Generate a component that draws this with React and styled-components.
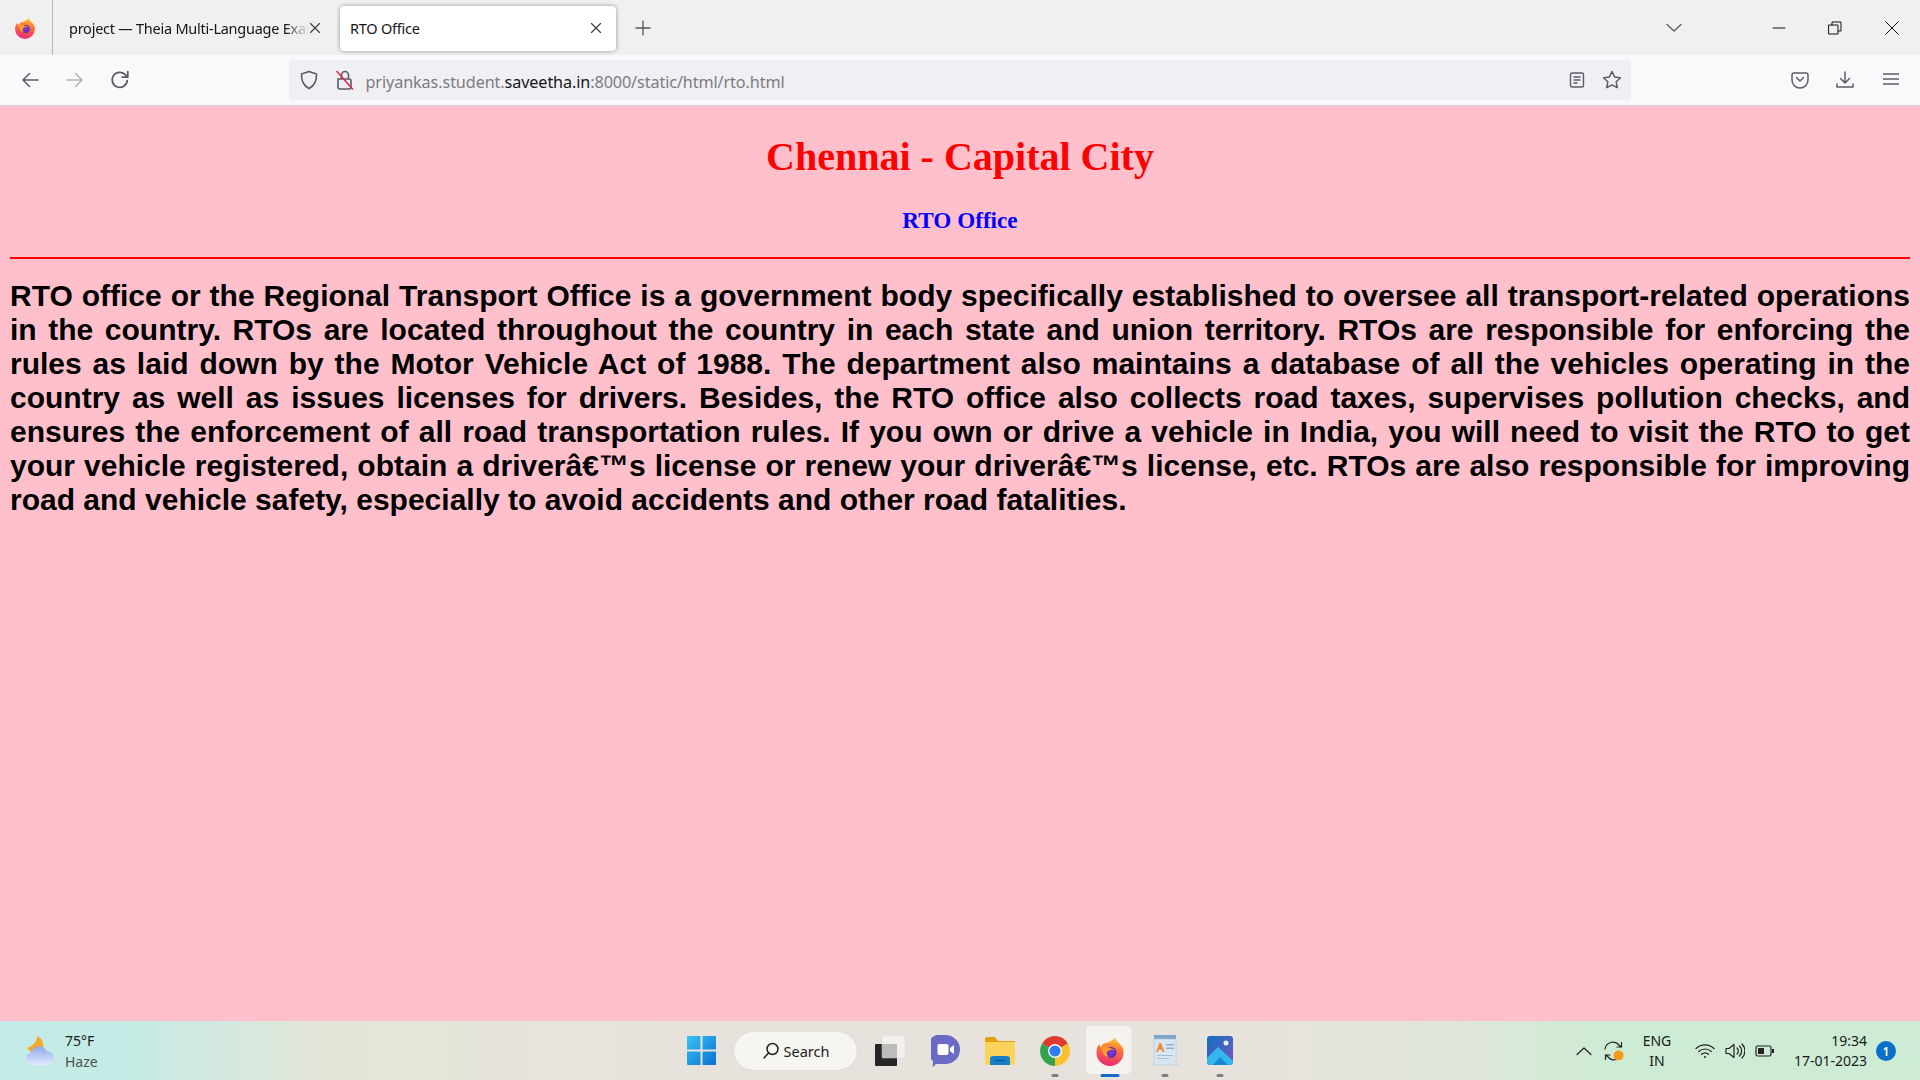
import styled, { createGlobalStyle } from "styled-components";

const GlobalStyle = createGlobalStyle`
  html, body {
    margin: 0;
    padding: 0;
    height: 100%;
    overflow: hidden;
  }
`;

const Screen = styled.div`
  width: 1920px;
  height: 1080px;
  display: flex;
  flex-direction: column;
  font-family: "Noto Sans", "Open Sans", sans-serif;
`;

const TabBar = styled.div`
  height: 55px;
  flex: none;
  background: #f0f0f0;
  display: flex;
  align-items: center;
`;

const LogoSlot = styled.div`
  width: 53px;
  height: 55px;
  border-right: 1px solid #b5b5b5;
  display: flex;
  align-items: center;
  justify-content: center;
  padding-right: 3px;
  box-sizing: border-box;
`;

const Tab = styled.div`
  height: 45px;
  box-sizing: border-box;
  display: flex;
  align-items: center;
  justify-content: space-between;
  font-size: 14.5px;
  letter-spacing: -0.25px;
  color: #15141a;
  border-radius: 4px;
  margin-top: 1px;
  background: ${(p) => (p.$active ? "#fff" : "transparent")};
  box-shadow: ${(p) => (p.$active ? "0 0 4px rgba(0,0,0,.4)" : "none")};
  width: ${(p) => (p.$active ? "276px" : "279px")};
  margin-left: ${(p) => (p.$active ? "7px" : "1px")};
  padding: ${(p) => (p.$active ? "0 14px 0 10px" : "0 12px 0 15px")};
`;

const TabTitle = styled.span`
  white-space: nowrap;
  overflow: hidden;
  flex: 1;
  -webkit-mask-image: ${(p) =>
    p.$fade ? "linear-gradient(90deg, #000 90%, transparent 100%)" : "none"};
  mask-image: ${(p) =>
    p.$fade ? "linear-gradient(90deg, #000 90%, transparent 100%)" : "none"};
`;

const NewTab = styled.div`
  width: 30px;
  margin-left: 12px;
  display: flex;
  justify-content: center;
`;

const TabChevron = styled.div`
  margin-left: auto;
  margin-right: 69px;
  display: flex;
`;

const WinButton = styled.div`
  width: 56.5px;
  display: flex;
  justify-content: center;
`;

const Toolbar = styled.div`
  height: 51px;
  flex: none;
  box-sizing: border-box;
  background: #f9f9fb;
  border-bottom: 1px solid #d0d0d4;
  display: flex;
  align-items: center;
  padding-left: 7.5px;
`;

const NavButton = styled.div`
  width: ${(p) => p.$w || 45}px;
  display: flex;
  justify-content: center;
`;

const UrlBar = styled.div`
  margin-left: 146px;
  width: 1342px;
  height: 40px;
  box-sizing: border-box;
  background: #f0f0f4;
  border-radius: 4px;
  display: flex;
  align-items: center;
  padding: 0 1px 0 10px;
  font-size: 16.2px;
  letter-spacing: -0.1px;
  color: #7b7b82;
`;

const UrlIcon = styled.span`
  display: flex;
  margin-right: ${(p) => p.$mr || 0}px;
`;

const UrlText = styled.span`
  flex: 1;
  white-space: nowrap;
  padding-top: 3px;
  b {
    font-weight: 400;
    color: #15141a;
  }
`;

const ToolbarEnd = styled.div`
  margin-left: 147px;
  display: flex;
`;

const Page = styled.main`
  flex: 1;
  min-height: 0;
  background: #ffc0cb;
  padding: 8px 10px 0;
`;

const Heading = styled.h1`
  margin: 20px 0 0;
  text-align: center;
  font: 700 40px/46px "Liberation Serif", serif;
  color: #ff0000;
`;

const SubHeading = styled.h2`
  margin: 27px 0 0;
  text-align: center;
  font: 700 23.2px/27px "Liberation Serif", serif;
  color: #0000ff;
`;

const Rule = styled.div`
  height: 2px;
  margin-top: 23px;
  background: #ff0000;
`;

const Body = styled.p`
  margin: 20px 0 0;
  text-align: justify;
  font: 700 30px/34px "Liberation Sans", Arial, sans-serif;
  color: #000;
`;

const Taskbar = styled.footer`
  height: 59px;
  flex: none;
  display: grid;
  grid-template-columns: 674px auto 1fr;
  align-items: center;
  background: linear-gradient(
    90deg,
    #c3ebe7 0%,
    #c5ebe5 7%,
    #e4e5d8 17%,
    #e7e3dc 35%,
    #e7e3dc 66%,
    #dfe6d9 76%,
    #cdebd5 84%,
    #cdebd5 100%
  );
`;

const Weather = styled.div`
  display: flex;
  align-items: center;
  padding-left: 26px;
  gap: 9px;
`;

const WeatherText = styled.div`
  font-size: 14px;
  line-height: 21px;
  color: #1a1a1a;
  span {
    display: block;
    color: #4a5250;
  }
`;

const Dock = styled.div`
  display: flex;
  align-items: center;
`;

const DockItem = styled.div`
  position: relative;
  width: 55px;
  height: 59px;
  display: flex;
  align-items: center;
  justify-content: center;
`;

const ActiveBox = styled.div`
  position: absolute;
  left: 3px;
  top: 5px;
  width: 44px;
  height: 48px;
  background: #f5f3ef;
  border-radius: 4px;
  box-shadow: 3px 0 0 -1px #f1eeea;
`;

const DockIcon = styled.span`
  position: relative;
  display: flex;
`;

const RunDot = styled.span`
  position: absolute;
  left: 50%;
  bottom: 3px;
  height: 3px;
  border-radius: 2px;
  transform: translateX(-50%);
  width: ${(p) => (p.$active ? 19 : 7)}px;
  background: ${(p) => (p.$active ? "#0f6cc9" : "#7d7d7d")};
`;

const SearchPill = styled.div`
  width: 123px;
  height: 38px;
  margin: 0 5.5px 0 5px;
  border-radius: 19px;
  background: #f6f5f2;
  box-shadow: 0 0 1px rgba(0, 0, 0, 0.2);
  display: flex;
  align-items: center;
  justify-content: center;
  gap: 4px;
  font-size: 14.5px;
  color: #222;
`;

const Tray = styled.div`
  display: flex;
  align-items: center;
  justify-self: end;
  padding-right: 23px;
  color: #1a1a1a;
  font-size: 14px;
`;

const TrayIcon = styled.span`
  display: flex;
  justify-content: center;
  width: ${(p) => p.$w || 30}px;
`;

const TrayStack = styled.div`
  line-height: 20px;
  text-align: ${(p) => p.$align || "center"};
  width: ${(p) => p.$w}px;
  margin: ${(p) => p.$m || 0};
  white-space: nowrap;
`;

const Badge = styled.span`
  position: absolute;
  right: 24px;
  bottom: 19px;
  width: 20px;
  height: 20px;
  border-radius: 50%;
  background: #0a6fc9;
  color: #fff;
  font-size: 12px;
  font-weight: 600;
  display: flex;
  align-items: center;
  justify-content: center;
`;

const TrayWrap = styled.div`
  position: relative;
  height: 59px;
  display: flex;
  justify-content: flex-end;
`;

const Line = ({ d, size = 18, color = "#5b5b66", width = 1.6, view = 18 }) => (
  <svg width={size} height={size} viewBox={`0 0 ${view} ${view}`} fill="none" stroke={color} strokeWidth={width} strokeLinecap="round" strokeLinejoin="round">
    <path d={d} />
  </svg>
);

const FirefoxLogo = ({ id, size = 24 }) => (
  <svg width={size} height={size} viewBox="1 0 30 31">
    <defs>
      <linearGradient id={`${id}a`} x1="0.6" y1="0" x2="0.4" y2="1">
        <stop offset="0" stopColor="#ffd02e" />
        <stop offset="0.4" stopColor="#ff7139" />
        <stop offset="1" stopColor="#e8297a" />
      </linearGradient>
      <radialGradient id={`${id}b`} cx="0.5" cy="0.5" r="0.6">
        <stop offset="0" stopColor="#8a3ad6" />
        <stop offset="1" stopColor="#4a2bb0" />
      </radialGradient>
    </defs>
    <path d="M21 1c.6 3 2.400 4.200 4.200 6.200C28.600 10.400 30 13 30 17a14 14 0 0 1-28 0c0-3.600 1.200-6.600 3-9 0 1.500.5 2.800 1.500 3.600C7.500 8.800 10 7 13 7c2.500-1.500 6.800-2.500 8-6z" fill={`url(#${id}a)`} />
    <circle cx="17" cy="17" r="5.600" fill={`url(#${id}b)`} />
    <path d="M7 11c3-.8 5.500-.5 8 1.500 2 .3 5 .6 6 3-2-2-5.500-1.500-7.500.3-1.500 2.200-.5 5 2 5.700-4 .3-7-2.500-7.500-5.500C7.500 14.500 7 13 7 11z" fill="#ff9a2b" />
  </svg>
);

const WeatherIcon = () => (
  <svg width="30" height="29" viewBox="0 0 30 29">
    <defs>
      <linearGradient id="cloudFill" gradientUnits="userSpaceOnUse" x1="0" y1="10" x2="0" y2="29">
        <stop offset="0" stopColor="#8fa8ea" />
        <stop offset="1" stopColor="#dfe9fc" />
      </linearGradient>
    </defs>
    <path d="M11 0C11.500 5 7 10 1 12l5 5 11-5c1-5-1-10-6-12z" fill="#f6a928" />
    <path d="M6 29A6 6 0 0 1 5 17a8.500 8.500 0 0 1 16-1.500A7 7 0 0 1 24 29z" fill="url(#cloudFill)" />
  </svg>
);

const WindowsLogo = () => (
  <svg width="29" height="29" viewBox="0 0 29 29">
    <defs>
      <linearGradient id="winFill" x1="0" y1="0" x2="1" y2="1">
        <stop offset="0" stopColor="#38c4f7" />
        <stop offset="1" stopColor="#0a6fd0" />
      </linearGradient>
    </defs>
    <path d="M0 1a1 1 0 0 1 1-1h12.500v13.500H0zM15.500 0H28a1 1 0 0 1 1 1v12.500H15.500zM0 15.500h13.500V29H1a1 1 0 0 1-1-1zM15.500 15.500H29V28a1 1 0 0 1-1 1H15.500z" fill="url(#winFill)" />
  </svg>
);

const TaskView = () => (
  <svg width="30" height="30" viewBox="0 0 30 30">
    <rect x="0" y="8" width="22" height="22" rx="1" fill="#262626" />
    <rect x="7" y="0" width="23" height="22" rx="1" fill="#f4f3f1" fillOpacity=".85" stroke="#d8d6d2" strokeWidth=".5" />
    <rect x="7" y="8" width="15" height="14" fill="#bdbcba" />
  </svg>
);

const ChatIcon = () => (
  <svg width="29" height="32" viewBox="0 0 29 32">
    <path d="M14.500 0a14.500 14.500 0 0 1 0 29H5l-3 3c-.500-1-.500-3 .200-6A14.500 14.500 0 0 1 14.500 0z" fill="#6b6bc6" />
    <rect x="6.500" y="9" width="11" height="11" rx="2" fill="#fff" />
    <path d="M19 13l4-3v9l-4-3z" fill="#fff" />
  </svg>
);

const FolderIcon = () => (
  <svg width="30" height="28" viewBox="0 0 30 28">
    <path d="M0 2a2 2 0 0 1 2-2h8l3 4h17v3H0z" fill="#e0a10e" />
    <path d="M0 5h30v22a1 1 0 0 1-1 1H1a1 1 0 0 1-1-1z" fill="#fbd25a" />
    <path d="M5 28v-6a3 3 0 0 1 3-3h14a3 3 0 0 1 3 3v6z" fill="#1a7fc8" />
    <rect x="10" y="23" width="10" height="1.200" fill="#0b4f8a" />
  </svg>
);

const ChromeIcon = () => (
  <svg width="30" height="30" viewBox="0 0 30 30">
    <path d="M15 15L2.010 7.500A15 15 0 0 1 27.990 7.500z" fill="#dc3b2e" />
    <path d="M15 15L27.990 7.500A15 15 0 0 1 15 30z" fill="#fbc02d" />
    <path d="M15 15L15 30A15 15 0 0 1 2.010 7.500z" fill="#34a24f" />
    <circle cx="15" cy="15" r="7" fill="#fff" />
    <circle cx="15" cy="15" r="5.600" fill="#2f7bf0" />
  </svg>
);

const NotesIcon = () => (
  <svg width="26" height="32" viewBox="0 0 26 32">
    <rect x="2" y="0" width="22" height="5" fill="#7ea6c8" />
    <path d="M2 4h22v23l2 3H0l2-3z" fill="#d8e6f2" stroke="#a9bfd2" strokeWidth=".5" />
    <rect x="14" y="9" width="8" height="1.500" fill="#8fb1cc" />
    <rect x="14" y="12.500" width="8" height="1.500" fill="#8fb1cc" />
    <path d="M4 17l3.500-9h1.500l3.500 9h-1.800l-.8-2.300H6.600L5.800 17z" fill="#f08a3a" />
    <rect x="5" y="20" width="16" height="1" fill="#a9bfd2" />
    <rect x="5" y="23" width="12" height="1" fill="#a9bfd2" />
  </svg>
);

const PhotosIcon = () => (
  <svg width="26" height="29" viewBox="0 0 26 29">
    <defs>
      <linearGradient id="photoBg" x1="0" y1="0" x2="1" y2="1">
        <stop offset="0" stopColor="#0e6fc4" />
        <stop offset="1" stopColor="#7a58b8" />
      </linearGradient>
    </defs>
    <rect width="26" height="29" rx="3" fill="url(#photoBg)" />
    <circle cx="19" cy="7" r="2.500" fill="#e8f0fb" />
    <path d="M0 22L11 11l11 10 4 4v1a3 3 0 0 1-3 3H3a3 3 0 0 1-3-3z" fill="#33b7ee" />
    <path d="M6 29l7-8 8 8z" fill="#1a86d6" />
  </svg>
);

const SearchGlyph = () => (
  <svg width="18" height="18" viewBox="0 0 18 18" fill="none" stroke="#222" strokeWidth="1.500" strokeLinecap="round">
    <circle cx="10.500" cy="7" r="5.500" />
    <path d="M6.500 11L2 16" />
  </svg>
);

const Chrome = () => (
  <>
    <TabBar>
      <LogoSlot>
        <FirefoxLogo id="ffTab" size={22} />
      </LogoSlot>
      <Tab>
        <TabTitle $fade>project — Theia Multi-Language Exam</TabTitle>
        <Line size={12} view={12} color="#3a3a40" width={1.1} d="M1.500 1.500l9 9M10.500 1.500l-9 9" />
      </Tab>
      <Tab $active>
        <TabTitle>RTO Office</TabTitle>
        <Line size={12} view={12} color="#3a3a40" width={1.1} d="M1.500 1.500l9 9M10.500 1.500l-9 9" />
      </Tab>
      <NewTab>
        <Line size={16} view={16} color="#55555c" width={1.3} d="M8 1v14M1 8h14" />
      </NewTab>
      <TabChevron>
        <Line size={16} view={16} color="#5b5b66" width={1.3} d="M1 4.500l7 6.500 7-6.500" />
      </TabChevron>
      <WinButton>
        <Line size={14} view={14} color="#111" width={1} d="M1 7h12" />
      </WinButton>
      <WinButton>
        <Line size={14} view={14} color="#111" width={1} d="M1 4h9v9H1zM4 4V1h9v9h-3" />
      </WinButton>
      <WinButton>
        <Line size={14} view={14} color="#111" width={1} d="M.5.500l13 13M13.500.500l-13 13" />
      </WinButton>
    </TabBar>
    <Toolbar>
      <NavButton>
        <Line size={18} d="M17 9H2M8.500 2.500L2 9l6.500 6.500" width={1.5} />
      </NavButton>
      <NavButton>
        <Line size={18} d="M1 9h15M9.500 2.500L16 9l-6.500 6.500" width={1.5} color="#b4b4b9" />
      </NavButton>
      <NavButton>
        <Line size={20} d="M15.500 9.500a6.800 6.800 0 1 1-2-5.500l2.500 2.500M16 1.500v5h-5" width={1.6} />
      </NavButton>
      <UrlBar>
        <UrlIcon $mr={17}>
          <Line size={20} view={20} width={1.6} d="M10 1.500l7.500 2.500c.3 7-1.500 11.500-7.500 14.500C4 15.500 2.200 11 2.500 4z" />
        </UrlIcon>
        <UrlIcon $mr={12}>
          <svg width="18" height="20" viewBox="0 0 18 20" fill="none" strokeWidth="1.600" strokeLinecap="round">
            <path d="M2 9h11a2 2 0 0 1 2 2v6a2 2 0 0 1-2 2H4a2 2 0 0 1-2-2zM5.500 9V5a3.500 3.500 0 0 1 7 0v4" stroke="#5b5b66" />
            <path d="M1 1.500L16.500 19" stroke="#e22850" />
          </svg>
        </UrlIcon>
        <UrlText>
          priyankas.student.<b>saveetha.in</b>:8000/static/html/rto.html
        </UrlText>
        <NavButton $w={35}>
          <Line size={16} view={16} width={1.4} d="M3 1h10a1.500 1.500 0 0 1 1.500 1.500v11A1.500 1.500 0 0 1 13 15H3a1.500 1.500 0 0 1-1.500-1.500v-11A1.500 1.500 0 0 1 3 1zM5 5h6M5 8h6M5 11h3" />
        </NavButton>
        <NavButton $w={35}>
          <Line size={20} view={20} width={1.5} d="M10 1.500l2.600 5.400 5.900.8-4.300 4.100 1 5.900-5.200-2.800-5.200 2.800 1-5.900L1.500 7.700l5.900-.8z" />
        </NavButton>
      </UrlBar>
      <ToolbarEnd>
        <NavButton $w={44}>
          <Line size={18} width={1.5} d="M3 2h12a2 2 0 0 1 2 2v5a8 8 0 0 1-16 0V4a2 2 0 0 1 2-2zM5.500 6.500L9 10l3.500-3.500" />
        </NavButton>
        <NavButton $w={46}>
          <Line size={18} width={1.5} d="M9 1v11M4.500 7.500L9 12l4.500-4.500M1 13v3h16v-3" />
        </NavButton>
        <NavButton $w={46}>
          <Line size={16} view={16} width={1.4} d="M0 3h16M0 8h16M0 13h16" />
        </NavButton>
      </ToolbarEnd>
    </Toolbar>
  </>
);

const dock = [
  { key: "task", icon: <TaskView /> },
  { key: "chat", icon: <ChatIcon /> },
  { key: "files", icon: <FolderIcon /> },
  { key: "chrome", icon: <ChromeIcon />, running: true },
  { key: "firefox", icon: <FirefoxLogo id="ffDock" size={30} />, running: true, active: true },
  { key: "notes", icon: <NotesIcon />, running: true },
  { key: "photos", icon: <PhotosIcon />, running: true },
];

const BottomBar = () => (
  <Taskbar>
    <Weather>
      <WeatherIcon />
      <WeatherText>
        75°F
        <span>Haze</span>
      </WeatherText>
    </Weather>
    <Dock>
      <DockItem>
        <WindowsLogo />
      </DockItem>
      <SearchPill>
        <SearchGlyph />
        Search
      </SearchPill>
      {dock.map((item) => (
        <DockItem key={item.key}>
          {item.active && <ActiveBox />}
          <DockIcon>{item.icon}</DockIcon>
          {item.running && <RunDot $active={item.active} />}
        </DockItem>
      ))}
    </Dock>
    <TrayWrap>
      <Tray>
        <TrayIcon $w={30}>
          <Line size={18} color="#222" width={1.2} d="M2 12.500L9 6l7 6.500" />
        </TrayIcon>
        <TrayIcon $w={30}>
          <svg width="22" height="22" viewBox="0 0 22 22" fill="none" stroke="#222" strokeWidth="1.200" strokeLinecap="round">
            <path d="M2 9a8 8 0 0 1 14-4l2 2M18.500 2.500V7H14M19 13a8 8 0 0 1-14 4l-2-2M2.500 19.500V15H7" />
            <circle cx="15.500" cy="15.500" r="5" fill="#f59a14" stroke="none" />
          </svg>
        </TrayIcon>
        <TrayStack $w={56} $m="0 5px 0 0">
          ENG
          <br />
          IN
        </TrayStack>
        <TrayIcon $w={30}>
          <svg width="20" height="16" viewBox="0 0 20 16" fill="none" stroke="#222" strokeWidth="1.200" strokeLinecap="round">
            <path d="M1 5.500a13 13 0 0 1 18 0M3.800 8.500a9 9 0 0 1 12.400 0M6.500 11.300a5 5 0 0 1 7 0" />
            <circle cx="10" cy="14" r="1" fill="#222" stroke="none" />
          </svg>
        </TrayIcon>
        <TrayIcon $w={30}>
          <svg width="20" height="16" viewBox="0 0 20 16" fill="none" stroke="#222" strokeWidth="1.200" strokeLinecap="round" strokeLinejoin="round">
            <path d="M1 5.500h3L9 1.500v13l-5-4H1zM12 5a4 4 0 0 1 0 6M14.500 3a7 7 0 0 1 0 10M17 1a10 10 0 0 1 0 14" />
          </svg>
        </TrayIcon>
        <TrayIcon $w={30}>
          <svg width="20" height="12" viewBox="0 0 20 12" fill="none" stroke="#222" strokeWidth="1.200">
            <rect x="1" y="1" width="15" height="10" rx="1.500" />
            <rect x="3" y="3" width="6" height="6" fill="#222" stroke="none" />
            <rect x="17" y="4" width="2" height="4" fill="#222" stroke="none" />
          </svg>
        </TrayIcon>
        <TrayStack $w={78} $align="right" $m="0 0 0 9px">
          19:34
          <br />
          17-01-2023
        </TrayStack>
        <TrayIcon $w={30} />
      </Tray>
      <Badge>1</Badge>
    </TrayWrap>
  </Taskbar>
);

const App = () => (
  <Screen>
    <GlobalStyle />
    <Chrome />
    <Page>
      <Heading>Chennai - Capital City</Heading>
      <SubHeading>RTO Office</SubHeading>
      <Rule />
      <Body>
        RTO office or the Regional Transport Office is a government body specifically established to oversee all
        transport-related operations in the country. RTOs are located throughout the country in each state and union
        territory. RTOs are responsible for enforcing the rules as laid down by the Motor Vehicle Act of 1988. The
        department also maintains a database of all the vehicles operating in the country as well as issues licenses for
        drivers. Besides, the RTO office also collects road taxes, supervises pollution checks, and ensures the
        enforcement of all road transportation rules. If you own or drive a vehicle in India, you will need to visit the
        RTO to get your vehicle registered, obtain a driverâ€™s license or renew your driverâ€™s license, etc. RTOs are
        also responsible for improving road and vehicle safety, especially to avoid accidents and other road fatalities.
      </Body>
    </Page>
    <BottomBar />
  </Screen>
);

export default App;
